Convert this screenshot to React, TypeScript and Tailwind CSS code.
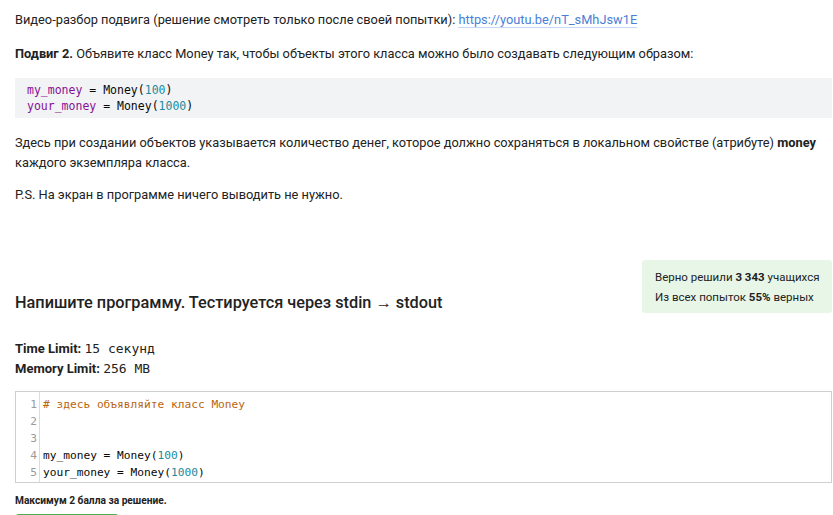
const mono = "font-['DejaVu_Sans_Mono','Liberation_Mono',monospace]";

const CodeLine = ({ a, n }: { a: string; n: string }) => (
  <div>
    <span className="text-[#871094]">{a}</span>
    <span className="text-[#080808]"> = Money(</span>
    <span className="text-[#1a8b9d]">{n}</span>
    <span className="text-[#080808]">)</span>
  </div>
);

const editorLines: { n: number; node: React.ReactNode }[] = [
  { n: 1, node: <span className="text-[#b8660f]"># здесь объявляйте класс Money</span> },
  { n: 2, node: <span>&nbsp;</span> },
  { n: 3, node: <span>&nbsp;</span> },
  {
    n: 4,
    node: (
      <span>
        my_money = Money(<span className="text-[#1a8b9d]">100</span>)
      </span>
    ),
  },
  {
    n: 5,
    node: (
      <span>
        your_money = Money(<span className="text-[#1a8b9d]">1000</span>)
      </span>
    ),
  },
];

export default function App() {
  return (
    <div className="w-[833px] h-[515px] overflow-hidden bg-white pl-[15px] pr-[1px] font-['Roboto',sans-serif] text-[12.8px] text-[#222]">
      <p className="pt-[10px] leading-5">
        Видео-разбор подвига (решение смотреть только после своей попытки):{" "}
        <a className="text-[#4a7fd8] border-b border-[#c5d8f5]">https://youtu.be/nT_sMhJsw1E</a>
      </p>

      <p className="mt-[14px] leading-5">
        <b className="font-bold">Подвиг 2.</b> Объявите класс Money так, чтобы объекты этого класса можно было создавать
        следующим образом:
      </p>

      <div className={`mt-[14px] bg-[#f2f3f5] px-3 py-[4px] h-[40px] text-[11.5px] leading-4 ${mono}`}>
        <CodeLine a="my_money" n="100" />
        <CodeLine a="your_money" n="1000" />
      </div>

      <p className="mt-[15px] leading-5">
        Здесь при создании объектов указывается количество денег, которое должно сохраняться в локальном свойстве
        (атрибуте) <b className="font-bold">money</b> каждого экземпляра класса.
      </p>

      <p className="mt-[12px] leading-5">P.S. На экран в программе ничего выводить не нужно.</p>

      <div className="mt-[55px] flex items-end justify-between">
        <h2 className="text-[16.3px] font-medium leading-5">Напишите программу. Тестируется через stdin → stdout</h2>
        <div className="w-[190px] h-[53px] rounded-[3px] bg-[#e8f6e8] px-[13px] pt-[7px] text-[11.5px] leading-[20px] whitespace-nowrap text-[#222]">
          <div>
            Верно решили <b className="font-bold">3 343</b> учащихся
          </div>
          <div>
            Из всех попыток <b className="font-bold">55%</b> верных
          </div>
        </div>
      </div>

      <div className="mt-[26px] text-[13px] leading-5">
        <div>
          <b className="font-bold">Time Limit:</b> <span className={mono}>15 секунд</span>
        </div>
        <div>
          <b className="font-bold">Memory Limit:</b> <span className={mono}>256 MB</span>
        </div>
      </div>

      <div className={`mt-[12px] flex border border-[#cfcfcf] h-[92px] text-[11.2px] leading-[17px] ${mono}`}>
        <div className="w-[24px] border-r border-[#dcdcdc] pt-[4px] text-right pr-[2px] text-[#9a9a9a]">
          {editorLines.map((l) => (
            <div key={l.n}>{l.n}</div>
          ))}
        </div>
        <div className="pt-[4px] pl-[3px] text-[#080808]">
          {editorLines.map((l) => (
            <div key={l.n}>{l.node}</div>
          ))}
        </div>
      </div>

      <p className="mt-[10px] text-[10.2px] font-bold leading-4">Максимум 2 балла за решение.</p>
      <div className="mt-[5px] w-[104px] h-[20px] rounded-[4px] bg-[#4caf50]" />
    </div>
  );
}
